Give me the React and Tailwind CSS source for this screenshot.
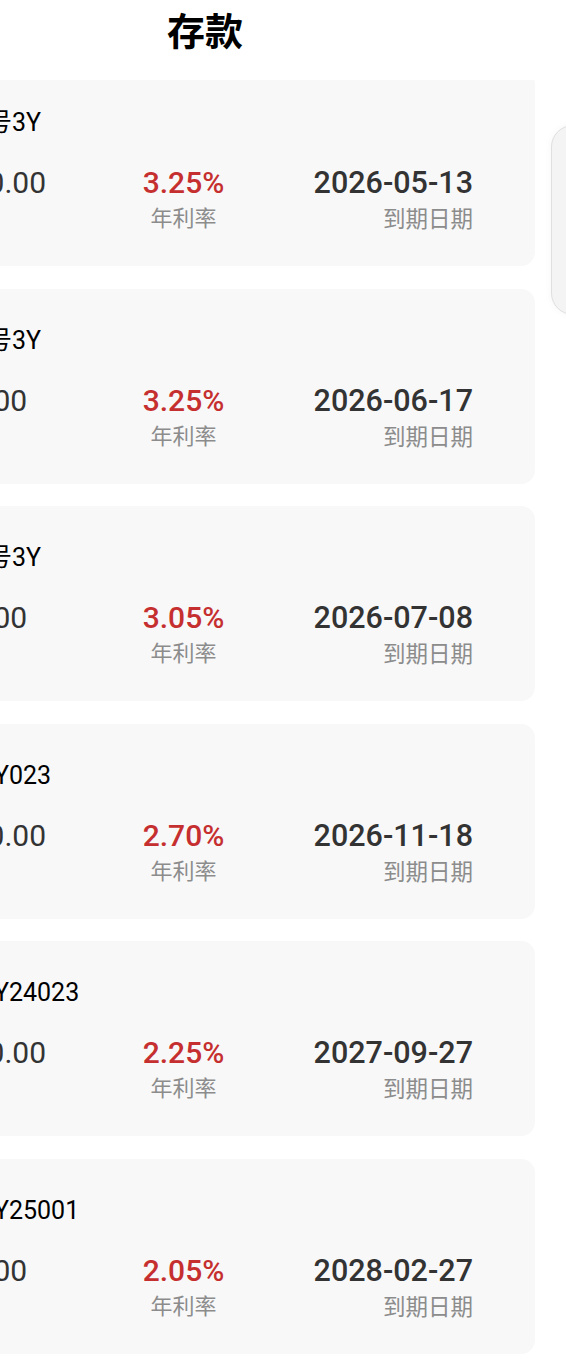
import React from "react";

const deposits = [
  { name: "稳盈号3Y", amount: "5000.00", rate: "3.25%", due: "2026-05-13" },
  { name: "稳盈号3Y", amount: "20,000", rate: "3.25%", due: "2026-06-17" },
  { name: "惠存号3Y", amount: "30,000", rate: "3.05%", due: "2026-07-08" },
  { name: "存单-Y023", amount: "8000.00", rate: "2.70%", due: "2026-11-18" },
  { name: "存单-Y24023", amount: "6000.00", rate: "2.25%", due: "2027-09-27" },
  { name: "存单-Y25001", amount: "10,000", rate: "2.05%", due: "2028-02-27" },
];

const font = { fontFamily: 'Roboto, "Noto Sans CJK SC", sans-serif' };

function DepositCard({ item }) {
  return (
    <div className="ml-[-125px] w-[660px] rounded-[14px] bg-[#f8f8f8] px-[62px] pt-[36px] pb-[33px]">
      <div className="text-[25px] leading-[32px] text-black whitespace-nowrap">
        {item.name}
      </div>
      <div className="mt-[26px] flex">
        <div className="w-[186px] shrink-0 text-[30px] leading-[36px] text-[#333] whitespace-nowrap">
          {item.amount}
        </div>
        <div className="w-[121px] shrink-0 text-center">
          <div className="text-[30px] leading-[36px] font-medium text-[#c62f2f]">
            {item.rate}
          </div>
          <div className="mt-[4px] text-[22px] leading-[28px] text-[#8c8c8c]">
            年利率
          </div>
        </div>
        <div className="flex-1 text-right">
          <div className="text-[30.5px] leading-[36px] font-medium text-[#333]">
            {item.due}
          </div>
          <div className="mt-[4px] text-[22.5px] leading-[28px] text-[#8c8c8c]">
            到期日期
          </div>
        </div>
      </div>
    </div>
  );
}

export default function App() {
  return (
    <div className="relative h-[1367px] w-[566px] overflow-hidden bg-white" style={font}>
      <div className="relative z-10 h-[80px] bg-white">
        <div className="ml-[-125px] w-[660px] text-center text-[38px] font-bold leading-[64px] text-black">
          存款
        </div>
      </div>
      <div className="mt-[-9px] flex flex-col gap-[22.5px]">
        {deposits.map((item, i) => (
          <DepositCard key={i} item={item} />
        ))}
      </div>
      <div className="absolute left-[551px] top-[125px] h-[190px] w-[40px] rounded-l-[22px] border border-[#e0e0e0] bg-[#f4f4f4] shadow-[0_0_8px_rgba(0,0,0,0.04)]" />
    </div>
  );
}
